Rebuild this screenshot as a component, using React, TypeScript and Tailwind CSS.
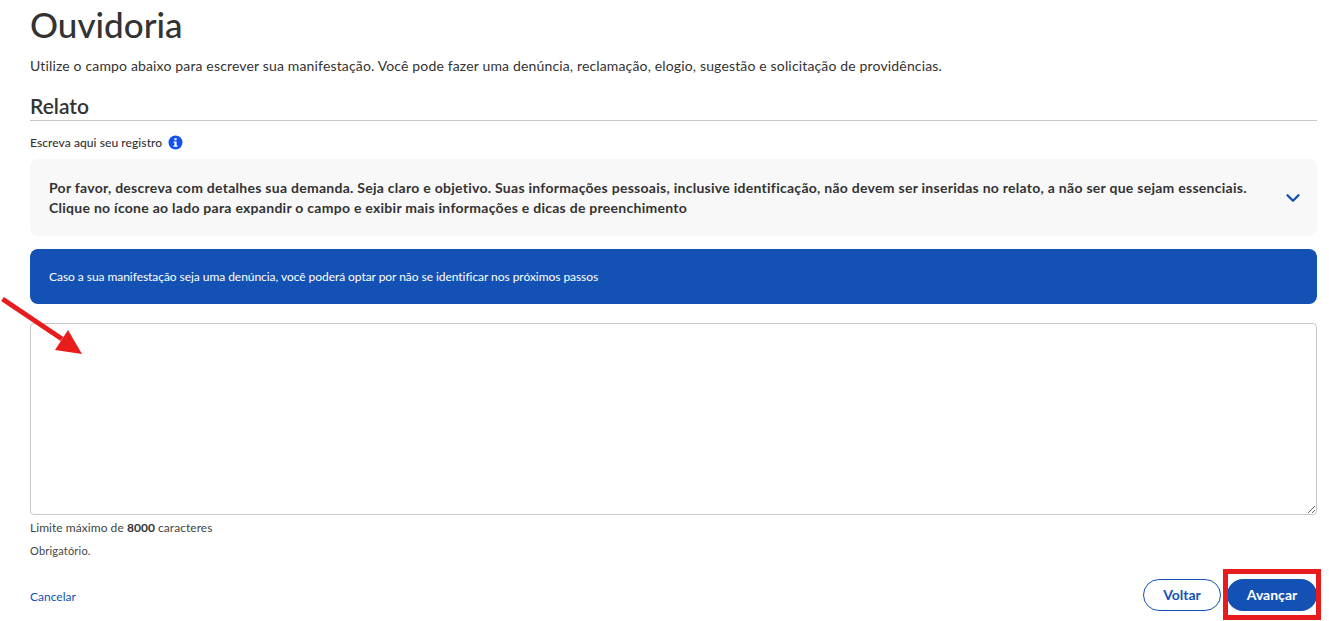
import { ChevronDown } from 'lucide-react'

const FONT = "font-['Lato','Noto_Sans',sans-serif]"

export default function App() {
  return (
    <div className={`relative h-[621px] overflow-hidden bg-white pl-[30px] pr-3 text-[#333333] ${FONT}`}>
      <h1 className="h-[53px] pt-[1px] text-[35px] leading-[46px] font-medium">Ouvidoria</h1>
      <p className="mt-[3px] h-[20px] text-sm leading-5 tracking-[0.155px]">
        Utilize o campo abaixo para escrever sua manifestação. Você pode fazer uma denúncia, reclamação, elogio, sugestão e solicitação de providências.
      </p>

      {/* Relato */}
      <h2 className="mt-[10px] h-[35px] border-b border-[#c8c8c8] pt-[7px] text-[21px] leading-[26px] font-semibold">Relato</h2>
      <div className="mt-[13px] flex h-[16px] items-center gap-[6px] text-xs font-medium tracking-[0.08px]">
        <span className="pt-[1px]">Escreva aqui seu registro</span>
        <svg width="15" height="15" viewBox="0 0 15 15">
          <circle cx="7.5" cy="7.5" r="7" fill="#1351f0" />
          <rect x="6.4" y="3.2" width="2.2" height="2" fill="#fff" />
          <path d="M5.6 6.4h3v4h1v1.3H5.4v-1.3h1.1V7.7h-.9z" fill="#fff" />
        </svg>
      </div>

      <div className="mt-[9px] flex h-[77px] items-center justify-between rounded-lg bg-[#f8f8f8] pl-[19px] pr-[13px]">
        <p className="text-[14px] leading-5 font-bold tracking-[0.27px]">
          Por favor, descreva com detalhes sua demanda. Seja claro e objetivo. Suas informações pessoais, inclusive identificação, não devem ser inseridas no relato, a não ser que sejam essenciais.
          <br />
          Clique no ícone ao lado para expandir o campo e exibir mais informações e dicas de preenchimento
        </p>
        <ChevronDown className="h-[22px] w-[22px] shrink-0 text-[#1351b4]" strokeWidth={2.6} />
      </div>

      <div className="mt-[13px] flex h-[55px] items-center rounded-lg bg-[#1351b4] pl-[19px] text-xs tracking-[-0.05px] text-white">
        Caso a sua manifestação seja uma denúncia, você poderá optar por não se identificar nos próximos passos
      </div>

      <textarea
        aria-label="Relato"
        className="mt-[19px] block h-[192px] w-full rounded border border-[#c8c8c8] bg-white"
      />

      <p className="mt-[5px] h-[16px] text-xs leading-4 tracking-[0.05px] text-[#444444]">
        Limite máximo de <b className="font-bold text-[#333333]">8000</b> caracteres
      </p>
      <p className="mt-[7px] h-[16px] text-[11px] leading-4 tracking-[0.2px] text-[#444444]">Obrigatório.</p>

      <div className="mt-[20px] flex h-[32px] items-center justify-between">
        <a className="pt-[3px] text-xs text-[#1351b4]">Cancelar</a>
        <div className="flex gap-[6px]">
          <button className="h-[32px] w-[78px] rounded-full border border-[#1351b4] bg-white text-sm font-bold text-[#1351b4]">
            Voltar
          </button>
          <button className="h-[32px] w-[90px] rounded-full bg-[#1351b4] text-sm font-bold text-white">
            Avançar
          </button>
        </div>
      </div>

      {/* annotations */}
      <svg className="absolute left-0 top-[290px]" width="90" height="70" viewBox="0 0 90 70">
        <path d="M2.5 9 L62 49" stroke="#e81c1c" strokeWidth="5" />
        <path d="M55 60 L68 40 L82 64 Z" fill="#e81c1c" />
      </svg>
      <div className="absolute left-[1223px] top-[569px] h-[51px] w-[98px] border-[5px] border-[#e81c1c]" />
    </div>
  )
}
